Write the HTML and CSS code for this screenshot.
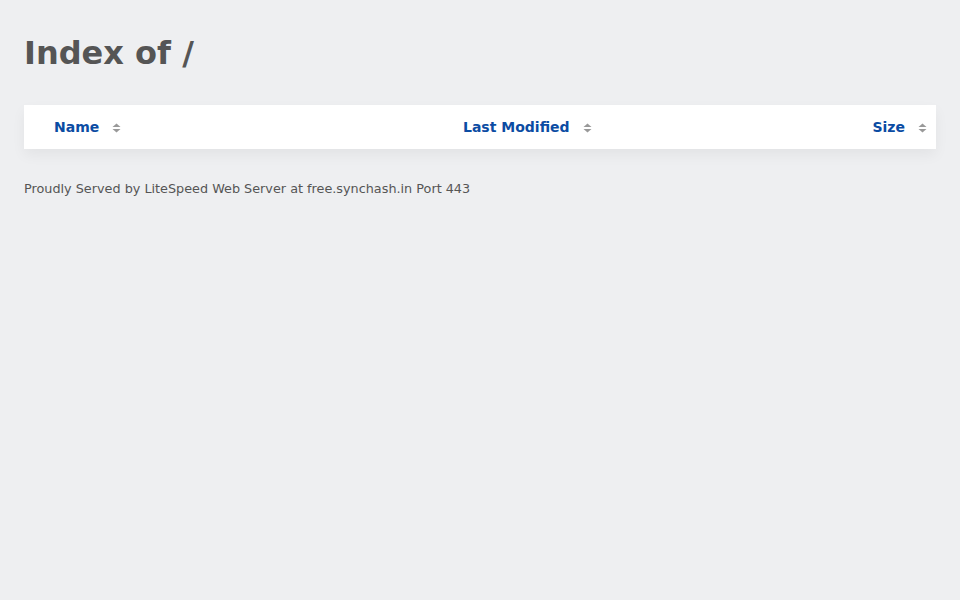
FILE: index.html
```html
<!DOCTYPE html>
<html lang="en">
<head>
    <meta charset="UTF-8">
    <meta name="viewport" content="width=device-width, initial-scale=1.0">
    <title>Index of /</title>
    <link rel="stylesheet" href="styles.css">
</head>
<body>

<div class="wrap">
    <h1>Index of /</h1>
    <table class="listing">
        <thead>
            <tr>
                <th class="col-name"><a href="#">Name</a><svg class="sort" width="9" height="10" viewBox="0 0 9 10"><path d="M4.5 0.5 L8.5 4 L0.5 4 Z"/><path d="M0.5 6 L8.5 6 L4.5 9.5 Z"/></svg></th>
                <th class="col-mod"><a href="#">Last Modified</a><svg class="sort" width="9" height="10" viewBox="0 0 9 10"><path d="M4.5 0.5 L8.5 4 L0.5 4 Z"/><path d="M0.5 6 L8.5 6 L4.5 9.5 Z"/></svg></th>
                <th class="col-size"><a href="#">Size</a><svg class="sort" width="9" height="10" viewBox="0 0 9 10"><path d="M4.5 0.5 L8.5 4 L0.5 4 Z"/><path d="M0.5 6 L8.5 6 L4.5 9.5 Z"/></svg></th>
            </tr>
        </thead>
        <tbody></tbody>
    </table>
    <p class="footer">Proudly Served by LiteSpeed Web Server at free.synchash.in Port 443</p>
</div>

</body>
</html>
```

FILE: styles.css
```css
body { margin: 0; background-color: #eeeff1; font-family: "DejaVu Sans", sans-serif; color: #555; }
.wrap { padding: 35px 24px 24px; }
h1 { margin: 0 0 33px; font-size: 32px; font-weight: bold; color: #555; line-height: 37px; }
.listing { width: 100%; border-collapse: collapse; background-color: #fff; box-shadow: 0 6px 14px rgba(0, 0, 0, 0.05); }
.listing th { height: 44px; padding: 0; font-size: 14px; font-weight: bold; text-align: left; white-space: nowrap; }
.listing th a { color: #0b4ca3; text-decoration: none; }
.col-name { width: 379px; padding-left: 30px !important; }
.col-mod { padding-left: 30px !important; }
.col-size { text-align: right !important; padding-right: 9px !important; }
.sort { fill: #999; vertical-align: middle; margin-left: 13px; position: relative; top: 0; }
.footer { margin: 32px 0 0; font-size: 12.8px; line-height: 15px; color: #555; }
```
